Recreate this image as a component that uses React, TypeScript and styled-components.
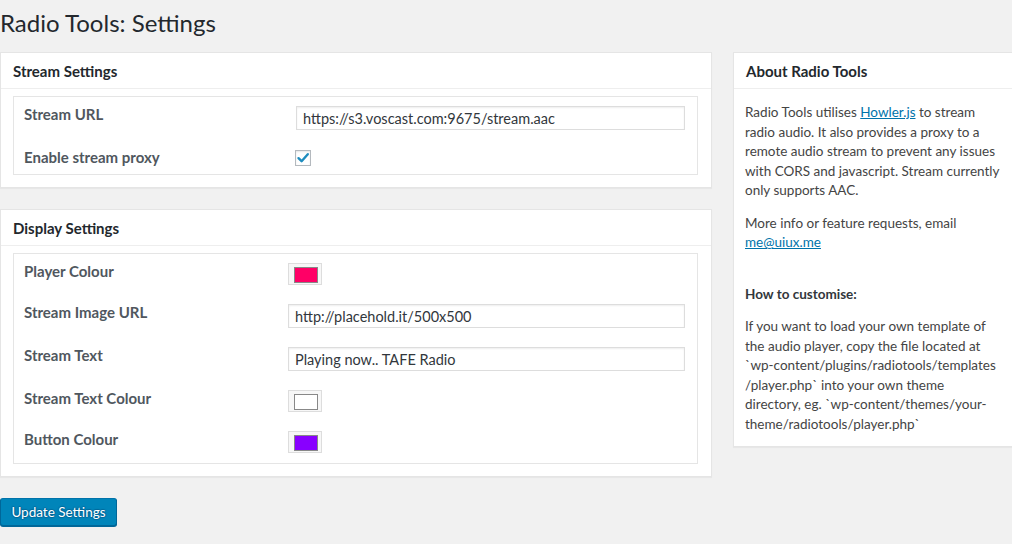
import React from "react";
import styled, { createGlobalStyle } from "styled-components";

const Global = createGlobalStyle`
  html, body { margin: 0; padding: 0; background: #f1f1f1; overflow: hidden; }
  body { font-family: Lato, "Noto Sans", sans-serif; color: #444; font-size: 13px; }
  * { box-sizing: border-box; }
`;

const Page = styled.div`
  width: 1012px;
  height: 544px;
`;

const Title = styled.h1`
  margin: 0 0 10px;
  padding: 8px 0 5px;
  font-size: 24px;
  line-height: 29px;
  font-weight: 400;
  color: #23282d;
`;

const Columns = styled.div`
  display: flex;
  align-items: flex-start;
  gap: 21px;
`;

const Main = styled.div`
  width: 712px;
  flex: none;
  display: flex;
  flex-direction: column;
  gap: 21px;
`;

const Side = styled.div`
  width: 280px;
  flex: none;
`;

const Panel = styled.section`
  background: #fff;
  border: 1px solid #e5e5e5;
  box-shadow: 0 1px 1px rgba(0, 0, 0, 0.04);
`;

const PanelHeader = styled.h2`
  margin: 0;
  height: 36px;
  padding: 0 12px;
  display: flex;
  align-items: center;
  font-size: 15px;
  font-weight: 700;
  color: #23282d;
  border-bottom: 1px solid #eee;
`;

const PanelBody = styled.div`
  padding: 7px 13px 12px 12px;
`;

const FormBox = styled.div`
  border: 1px solid #e5e5e5;
`;

const Row = styled.div<{ $labelWidth: number; $height: number }>`
  display: grid;
  grid-template-columns: ${(p) => p.$labelWidth}px 1fr;
  height: ${(p) => p.$height}px;
  padding-right: 12px;
`;

const Label = styled.div`
  padding: 8px 0 0 10px;
  font-size: 15px;
  line-height: 18px;
  font-weight: 700;
  color: #50575e;
`;

const TextInput = styled.input`
  margin-top: 9px;
  height: 24px;
  width: 100%;
  border: 1px solid #ddd;
  box-shadow: inset 0 1px 2px rgba(0, 0, 0, 0.07);
  background: #fff;
  padding: 0 6px;
  font-family: Lato, "Noto Sans", sans-serif;
  font-size: 14.5px;
  color: #32373c;
  outline: none;
`;

const Swatch = styled.div<{ $color: string }>`
  margin-top: 9px;
  width: 34px;
  height: 22px;
  border: 1px solid #ddd;
  background: #f7f7f7;
  padding: 3px 5px;
  &::after {
    content: "";
    display: block;
    width: 100%;
    height: 100%;
    background: ${(p) => p.$color};
    border: 1px solid #888;
  }
`;

const CheckBox = styled.div`
  margin-top: 10px;
  margin-left: -1px;
  width: 16px;
  height: 16px;
  border: 1px solid #b4b9be;
  background: #fff;
  box-shadow: inset 0 1px 2px rgba(0, 0, 0, 0.1);
  display: flex;
  align-items: center;
  justify-content: center;
`;

const SideBody = styled.div`
  padding: 1px 11px 12px 11px;
`;

const Para = styled.p<{ $gap?: number }>`
  margin: ${(p) => p.$gap ?? 13}px 0 0;
  font-size: 13.5px;
  line-height: 19.5px;
  color: #444;
  white-space: nowrap;
`;

const Strong = styled.strong`
  font-weight: 700;
  color: #32373c;
`;

const Link = styled.a`
  color: #0073aa;
  text-decoration: underline;
`;

const Footer = styled.div``;

const Button = styled.button`
  height: 28px;
  width: 117px;
  padding: 0 8px 1px;
  border: 1px solid #0073aa;
  border-color: #0073aa #006799 #006799;
  border-radius: 3px;
  background: #0085ba;
  box-shadow: 0 1px 0 #006799;
  color: #fff;
  font-family: Lato, "Noto Sans", sans-serif;
  font-size: 13.5px;
  text-shadow: 0 -1px 1px #006799, 1px 0 1px #006799, 0 1px 1px #006799, -1px 0 1px #006799;
  cursor: pointer;
`;

const Check = () => (
  <svg width="14" height="14" viewBox="0 0 14 14">
    <path d="M2.5 7.2 L5.6 10.2 L11.8 3.2" fill="none" stroke="#1e8cbe" strokeWidth="2.4" strokeLinecap="round" strokeLinejoin="round" />
  </svg>
);

export default function App() {
  return (
    <Page>
      <Global />
      <Title>Radio Tools: Settings</Title>
      <Columns>
        <Main>
          <Panel>
            <PanelHeader>Stream Settings</PanelHeader>
            <PanelBody>
              <FormBox>
                <Row $labelWidth={282} $height={43}>
                  <Label>Stream URL</Label>
                  <TextInput readOnly value="https://s3.voscast.com:9675/stream.aac" />
                </Row>
                <Row $labelWidth={282} $height={34}>
                  <Label>Enable stream proxy</Label>
                  <CheckBox>
                    <Check />
                  </CheckBox>
                </Row>
              </FormBox>
            </PanelBody>
          </Panel>
          <Panel>
            <PanelHeader>Display Settings</PanelHeader>
            <PanelBody>
              <FormBox>
                <Row $labelWidth={274} $height={41}>
                  <Label>Player Colour</Label>
                  <Swatch $color="#ff0066" />
                </Row>
                <Row $labelWidth={274} $height={43}>
                  <Label>Stream Image URL</Label>
                  <TextInput readOnly value="http://placehold.it/500x500" />
                </Row>
                <Row $labelWidth={274} $height={43}>
                  <Label>Stream Text</Label>
                  <TextInput readOnly value="Playing now.. TAFE Radio" />
                </Row>
                <Row $labelWidth={274} $height={41}>
                  <Label>Stream Text Colour</Label>
                  <Swatch $color="#ffffff" />
                </Row>
                <Row $labelWidth={274} $height={41}>
                  <Label>Button Colour</Label>
                  <Swatch $color="#8800ff" />
                </Row>
              </FormBox>
            </PanelBody>
          </Panel>
          <Footer>
            <Button>Update Settings</Button>
          </Footer>
        </Main>
        <Side>
          <Panel>
            <PanelHeader>About Radio Tools</PanelHeader>
            <SideBody>
              <Para>
                Radio Tools utilises <Link href="#">Howler.js</Link> to stream
                <br />
                radio audio. It also provides a proxy to a
                <br />
                remote audio stream to prevent any issues
                <br />
                with CORS and javascript. Stream currently
                <br />
                only supports AAC.
              </Para>
              <Para>
                More info or feature requests, email
                <br />
                <Link href="#">me@uiux.me</Link>
              </Para>
              <Para $gap={32}>
                <Strong>How to customise:</Strong>
              </Para>
              <Para>
                If you want to load your own template of
                <br />
                the audio player, copy the file located at
                <br />
                `wp-content/plugins/radiotools/templates
                <br />
                /player.php` into your own theme
                <br />
                directory, eg. `wp-content/themes/your-
                <br />
                theme/radiotools/player.php`
              </Para>
            </SideBody>
          </Panel>
        </Side>
      </Columns>
    </Page>
  );
}
